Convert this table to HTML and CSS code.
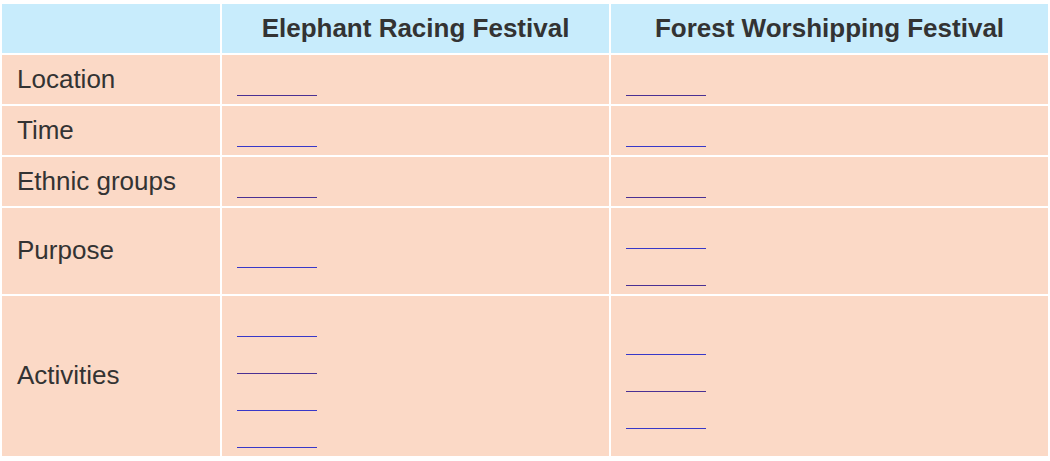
FILE: index.html
```html
<!DOCTYPE html>
<html lang="en">
<head>
<meta charset="utf-8">
<title>Festivals</title>
<link rel="stylesheet" href="styles.css">
</head>
<body>
<div class="wrap">
<table class="grid">
  <colgroup>
    <col class="c1">
    <col class="c2">
    <col class="c3">
  </colgroup>
  <thead>
    <tr>
      <th class="corner"></th>
      <th>Elephant Racing Festival</th>
      <th>Forest Worshipping Festival</th>
    </tr>
  </thead>
  <tbody>
    <tr>
      <td class="label">Location</td>
      <td><div class="blank p"></div></td>
      <td><div class="blank p"></div></td>
    </tr>
    <tr>
      <td class="label">Time</td>
      <td><div class="blank"></div></td>
      <td><div class="blank"></div></td>
    </tr>
    <tr>
      <td class="label">Ethnic groups</td>
      <td><div class="blank p"></div></td>
      <td><div class="blank p"></div></td>
    </tr>
    <tr>
      <td class="label">Purpose</td>
      <td><div class="blank"></div></td>
      <td><div class="blank"></div><div class="blank p"></div></td>
    </tr>
    <tr>
      <td class="label">Activities</td>
      <td><div class="blank"></div><div class="blank p"></div><div class="blank"></div><div class="blank"></div></td>
      <td class="up"><div class="blank"></div><div class="blank p"></div><div class="blank"></div></td>
    </tr>
  </tbody>
</table>
</div>
</body>
</html>
```

FILE: styles.css
```css
html, body {
  margin: 0;
  padding: 0;
  background: #ffffff;
}

.wrap {
  padding-top: 2px;
}

.grid {
  border-collapse: separate;
  border-spacing: 2px;
  table-layout: fixed;
  width: 1050px;
  font-family: "Liberation Sans", Arial, sans-serif;
  font-size: 26px;
  color: #333333;
}

.c1 { width: 218px; }
.c2 { width: 387px; }
.c3 { width: 437px; }

.grid th {
  background: #c8ecfc;
  height: 48px;
  padding: 0 0 1px;
  font-weight: bold;
  text-align: center;
  vertical-align: middle;
  line-height: 30px;
}

.grid td {
  background: #fbd9c6;
  padding: 6px 15px;
  vertical-align: middle;
}

.grid td.label {
  line-height: 30px;
  padding-bottom: 7px;
  padding-top: 5px;
}

.grid td.up {
  padding-bottom: 7px;
  padding-top: 5px;
}

.blank {
  width: 80px;
  height: 34px;
  border-bottom: 1px solid #3838c8;
  margin-bottom: 2px;
}

.blank.p {
  border-bottom-color: #4a3193;
}
```
